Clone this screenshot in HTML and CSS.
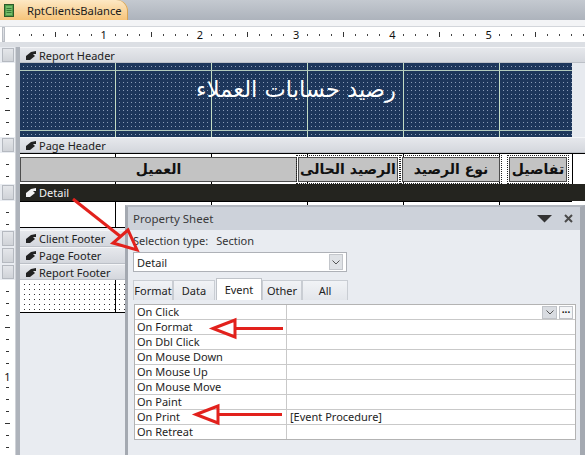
FILE: index.html
```html
<!DOCTYPE html>
<html lang="en">
<head>
<meta charset="utf-8">
<title>RptClientsBalance</title>
<link rel="stylesheet" href="styles.css">
</head>
<body>
<div class="tabstrip">
  <div class="doc-tab">
    <svg class="doc-icon" width="10" height="13" viewBox="0 0 10 13"><rect x="0.5" y="0.5" width="9" height="12" fill="#4f9c48" stroke="#2c5a29"/><rect x="2" y="2" width="6" height="9" fill="#74bb69"/><path d="M2.5 4.5h5M2.5 6.5h5M2.5 8.5h5" stroke="#3a7a35"/></svg>
    <span class="doc-title">RptClientsBalance</span>
  </div>
</div>
<div class="strip-top"></div>
<div class="ruler-row">
  <div class="corner"></div>
  <div class="hruler">
    <div class="inch first"><span class="num">1</span></div>
    <div class="inch"><span class="num">2</span></div>
    <div class="inch"><span class="num">3</span></div>
    <div class="inch"><span class="num">4</span></div>
    <div class="inch"><span class="num">5</span></div>
    <div class="inch"></div>
  </div>
</div>
<div class="strip-mid"></div>

<div class="design">
  <div class="vstrip"></div>

  <div class="selector"></div>
  <div class="bar"><svg class="bar-icon" width="10" height="9" viewBox="0 0 10 9"><polygon points="10,0 10,3 7,3 9,5 4,9 0,9 0,5 5,1" fill="currentColor"/></svg>Report Header</div>

  <div class="vruler"></div>
  <div class="sec rh">
    <div class="report rh-report">
      <div class="title-label">رصيد حسابات العملاء</div>
    </div>
    <div class="outside"></div>
  </div>

  <div class="selector"></div>
  <div class="bar"><svg class="bar-icon" width="10" height="9" viewBox="0 0 10 9"><polygon points="10,0 10,3 7,3 9,5 4,9 0,9 0,5 5,1" fill="currentColor"/></svg>Page Header</div>

  <div class="vruler"></div>
  <div class="sec ph">
    <div class="report ph-report">
      <div class="lbl w1">العميل</div>
      <div class="lbl w2 dotted">الرصيد الحالى</div>
      <div class="lbl w3 dotted">نوع الرصيد</div>
      <div class="lbl w4 dotted">تفاصيل</div>
    </div>
    <div class="outside"></div>
  </div>

  <div class="selector"></div>
  <div class="bar dark"><svg class="bar-icon" width="10" height="9" viewBox="0 0 10 9"><polygon points="10,0 10,3 7,3 9,5 4,9 0,9 0,5 5,1" fill="currentColor"/></svg>Detail</div>

  <div class="vruler"></div>
  <div class="sec dt">
    <div class="report dt-report"></div>
    <div class="outside"></div>
  </div>

  <div class="selector"></div>
  <div class="bar"><svg class="bar-icon" width="10" height="9" viewBox="0 0 10 9"><polygon points="10,0 10,3 7,3 9,5 4,9 0,9 0,5 5,1" fill="currentColor"/></svg>Client Footer</div>

  <div class="selector"></div>
  <div class="bar"><svg class="bar-icon" width="10" height="9" viewBox="0 0 10 9"><polygon points="10,0 10,3 7,3 9,5 4,9 0,9 0,5 5,1" fill="currentColor"/></svg>Page Footer</div>

  <div class="selector"></div>
  <div class="bar"><svg class="bar-icon" width="10" height="9" viewBox="0 0 10 9"><polygon points="10,0 10,3 7,3 9,5 4,9 0,9 0,5 5,1" fill="currentColor"/></svg>Report Footer</div>

  <div class="vruler tall"><span class="vr-num">1</span></div>
  <div class="sec rf">
    <div class="report rf-report"></div>
    <div class="outside"></div>
  </div>
  <div class="blank"></div>
</div>

<div class="prop">
  <div class="prop-title">
    <span class="t">Property Sheet</span>
    <svg class="pt-menu" width="15" height="8" viewBox="0 0 15 8"><polygon points="0,0 15,0 7.5,7.5" fill="#333"/></svg>
    <svg class="pt-close" width="9" height="9" viewBox="0 0 9 9"><path d="M1 1L8 8M8 1L1 8" stroke="#4a4a4a" stroke-width="2"/></svg>
  </div>
  <div class="sel-type"><span>Selection type:</span><span>Section</span></div>
  <div class="combo">
    <span>Detail</span>
    <span class="combo-btn"><svg width="8" height="5" viewBox="0 0 8 5"><path d="M0.5 0.5L4 4L7.5 0.5" fill="none" stroke="#555"/></svg></span>
  </div>
  <div class="tabs">
    <div class="tab t-format">Format</div>
    <div class="tab t-data">Data</div>
    <div class="tab t-event active">Event</div>
    <div class="tab t-other">Other</div>
    <div class="tab t-all">All</div>
  </div>
  <div class="pgrid">
    <div class="cell k">On Click</div>
    <div class="cell v btns">
      <span class="gbtn dd"><svg width="8" height="5" viewBox="0 0 8 5"><path d="M0.5 0.5L4 4L7.5 0.5" fill="none" stroke="#555"/></svg></span>
      <span class="gbtn ell">&middot;&middot;&middot;</span>
    </div>
    <div class="cell k">On Format</div><div class="cell v"></div>
    <div class="cell k">On Dbl Click</div><div class="cell v"></div>
    <div class="cell k">On Mouse Down</div><div class="cell v"></div>
    <div class="cell k">On Mouse Up</div><div class="cell v"></div>
    <div class="cell k">On Mouse Move</div><div class="cell v"></div>
    <div class="cell k">On Paint</div><div class="cell v"></div>
    <div class="cell k">On Print</div><div class="cell v">[Event Procedure]</div>
    <div class="cell k last">On Retreat</div><div class="cell v last"></div>
  </div>
</div>

<svg class="arrows" width="585" height="455" viewBox="0 0 585 455">
  <g fill="none" stroke="#e2211c" stroke-width="3">
    <line x1="73" y1="199" x2="120.5" y2="236.5"/>
    <polygon points="128,230 113,243 137,250"/>
    <line x1="283" y1="328.5" x2="235" y2="328.5"/>
    <polygon points="213,328.5 235,320 235,337"/>
    <line x1="282" y1="414.5" x2="218" y2="414.5"/>
    <polygon points="196,414.5 218,406 218,423"/>
  </g>
</svg>
</body>
</html>
```

FILE: styles.css
```css
* { box-sizing: border-box; margin: 0; padding: 0; }
html, body { width: 585px; height: 455px; overflow: hidden; }
body {
  position: relative;
  background: #e9ecf1;
  font-family: "Noto Sans", "Open Sans", "DejaVu Sans", sans-serif;
  font-size: 11px;
  color: #1e1e1e;
}

/* document tab */
.tabstrip {
  height: 20px;
  display: flex;
  align-items: flex-end;
  background: linear-gradient(#c4c9d0, #adb3bc);
}
.doc-tab {
  width: 128px;
  height: 20px;
  display: flex;
  align-items: center;
  gap: 13px;
  padding-left: 4px;
  background: linear-gradient(#fde8c4, #f6c47a);
  border-top-right-radius: 11px;
  box-shadow: inset -1px 0 0 #d6a456;
}
.doc-icon { display: block; flex: none; }
.doc-title { font-size: 11.2px; color: #1b1b1b; white-space: nowrap; }

.strip-top { height: 7px; background: #f3f4f6; border-bottom: 1px solid #d3d6db; }

/* horizontal ruler */
.ruler-row { height: 15px; display: flex; background: #fff; }
.corner {
  width: 13px;
  margin: 0 3px 0 2px;
  background: linear-gradient(#e4e6ea, #d2d5da);
  border: 1px solid #b9bdc4;
}
.hruler {
  flex: 1;
  display: flex;
  background-color: #fff;
  background-image:
    repeating-linear-gradient(to right, transparent 0 47px, #333 47px 48px, transparent 48px 96px),
    repeating-linear-gradient(to right, transparent 0 11px, #444 11px 12px);
  background-size: 100% 5px, 100% 2px;
  background-position: 0 50%, 0 50%;
  background-repeat: no-repeat;
}
.inch { flex: none; width: 96.25px; display: flex; justify-content: flex-end; align-items: center; }
.inch.first { width: 95.3px; }
.num {
  transform: translateX(50%);
  background: #fff;
  font-size: 11px;
  line-height: 13px;
  padding: 0 1px;
  color: #111;
}
.strip-mid { height: 5px; background: #dcdfe4; }

/* design surface */
.design {
  display: grid;
  grid-template-columns: 15px 5px 1fr;
  grid-template-rows: 16px 74px 16px 31px 17px 29px 17px 17px 16px 33px 1fr;
  height: 408px;
}
.vstrip {
  grid-column: 2;
  grid-row: 1 / -1;
  background: #aeb3bb;
  border-left: 1px solid #cfd2d7;
}
.selector {
  margin: 1px 1px 1px 2px;
  background: linear-gradient(#e4e6ea, #d0d3d8);
  border: 1px solid #b5b9c0;
}
.vruler {
  background-color: #fff;
  background-image:
    repeating-linear-gradient(to bottom, transparent 0 47px, #333 47px 48px, transparent 48px 96px),
    repeating-linear-gradient(to bottom, transparent 0 11px, #333 11px 12px);
  background-size: 5px 100%, 3px 100%;
  background-position: 5px 0, 6px 0;
  background-repeat: no-repeat;
}
.vruler.tall { grid-row: span 2; }
.vr-num {
  display: block;
  margin-top: 90px;
  background: #fff;
  text-align: center;
  font-size: 11px;
  line-height: 13px;
  color: #111;
}

.bar {
  display: flex;
  align-items: center;
  gap: 3px;
  padding-left: 6px;
  background: linear-gradient(#e6e8ec, #d4d7dd);
  border-top: 1px solid #f5f6f8;
  border-bottom: 1px solid #bcc0c7;
  font-size: 11px;
  color: #222;
  white-space: nowrap;
}
.bar.dark { background: #24241f; color: #f2f2f2; border-top-color: #24241f; border-bottom-color: #24241f; }
.bar-icon { flex: none; display: block; }

.sec { display: flex; min-height: 0; }
.report { width: 552px; flex: none; }
.outside { flex: 1; }

/* report header */
.rh-report {
  background-color: #8a9cb8;
  background-image:
    repeating-linear-gradient(to right, transparent 0 95px, #c3dcc4 95px 96px),
    linear-gradient(to right, #1d365b 3px, transparent 3px),
    linear-gradient(#1d365b 3px, transparent 3px);
  background-size: auto, 4px 4px, 4px 4px;
}
.rh .outside { background: #e7eaef; }
.title-label {
  margin-top: 7px;
  height: 61px;
  border-top: 1px solid #b1c9bb;
  border-bottom: 1px solid #b1c9bb;
  padding-top: 4px;
  color: #fff;
  font-family: "DejaVu Sans", sans-serif;
  font-size: 22.6px;
  line-height: 28px;
  text-align: center;
  direction: rtl;
}

/* page header */
.ph-report {
  display: flex;
  align-items: flex-start;
  padding-top: 3px;
  background-color: #fff;
  background-image: repeating-linear-gradient(to right, transparent 0 95px, #000 95px 96px);
  border-top: 1px solid #000;
}
.ph .outside { background: #fff; border-top: 1px solid #000; border-left: 1px solid #000; }
.lbl {
  flex: none;
  height: 25px;
  background: #c3c3c3;
  border: 1px solid #4d4d4d;
  font-family: "DejaVu Sans", sans-serif;
  font-weight: bold;
  font-size: 14px;
  line-height: 23px;
  text-align: center;
  direction: rtl;
  color: #111;
}
.lbl.dotted { outline: 1px dotted #222; outline-offset: 1px; }
.w1 { width: 277px; }
.w2 { width: 100px; margin-left: 1px; }
.w3 { width: 98px; margin-left: 4px; }
.w4 { width: 58px; margin-left: 9px; }

/* detail */
.dt-report {
  height: 27px;
  background-color: #fff;
  background-image: repeating-linear-gradient(to right, transparent 0 95px, #000 95px 96px);
  border-top: 1px solid #000;
  border-bottom: 1px solid #000;
}
.dt .outside { background: #fff; height: 27px; }

/* report footer */
.rf-report {
  background-color: #333;
  background-image:
    repeating-linear-gradient(to right, transparent 0 95px, #000 95px 96px),
    linear-gradient(to right, #fff 4px, transparent 4px),
    linear-gradient(#fff 4px, transparent 4px);
  background-size: auto, 5px 5px, 5px 5px;
  border-bottom: 1px solid #000;
}
.rf .outside { background: #e9ecf1; }
.blank { background: #e9ecf1; }

/* property sheet */
.prop {
  position: absolute;
  left: 125px;
  top: 205px;
  width: 460px;
  height: 250px;
  display: flex;
  flex-direction: column;
  background: #e9ecf1;
  border-left: 3px solid #a4a9b1;
  border-top: 2px solid #b3b8c0;
  border-right: 5px solid #a4a9b1;
}
.prop-title {
  flex: none;
  height: 23px;
  display: flex;
  align-items: center;
  gap: 12px;
  padding: 0 7px 0 5px;
  background: #cdd2da;
  font-size: 11.5px;
  color: #3a3a3a;
}
.prop-title .t { flex: 1; }
.pt-menu, .pt-close { display: block; flex: none; }
.sel-type {
  flex: none;
  height: 20px;
  display: flex;
  align-items: center;
  gap: 8px;
  padding-left: 5px;
  font-size: 11px;
  color: #333;
}
.combo {
  flex: none;
  margin: 2px 0 0 5px;
  width: 214px;
  height: 20px;
  display: flex;
  align-items: center;
  justify-content: space-between;
  padding-left: 3px;
  background: #fff;
  border: 1px solid #aeb1b7;
  font-size: 11px;
}
.combo-btn {
  width: 14px;
  height: 16px;
  margin-right: 3px;
  display: flex;
  align-items: center;
  justify-content: center;
  background: #dfe2e6;
  border: 1px solid #c3c6cb;
}
.tabs {
  flex: none;
  margin: 6px 0 0 5px;
  height: 22px;
  display: flex;
  align-items: flex-end;
}
.tab {
  height: 20px;
  display: flex;
  align-items: center;
  justify-content: center;
  font-size: 11px;
  color: #222;
  border: 1px solid #c9cdd3;
  border-bottom: none;
  background: linear-gradient(#f1f3f6, #e3e6eb);
}
.tab.active { height: 22px; background: #fff; border-color: #bfc3c9; }
.t-format { width: 40px; }
.t-data { width: 42px; }
.t-event { width: 46px; margin-left: 1px; }
.t-other { width: 40px; }
.t-all { width: 46px; }
.pgrid {
  flex: none;
  margin: 4px 0 0 6px;
  width: 442px;
  display: grid;
  grid-template-columns: 152px 1fr;
  background: #fff;
  border: 1px solid #b3b3b3;
}
.cell {
  height: 15px;
  border-bottom: 1px solid #c9c9c9;
  padding-left: 2px;
  font-size: 11px;
  line-height: 14px;
  white-space: nowrap;
  overflow: hidden;
  color: #1e1e1e;
}
.cell.k { border-right: 1px solid #c9c9c9; }
.cell.v { padding-left: 3px; }
.cell.last { border-bottom: none; height: 14px; }
.btns { display: flex; justify-content: flex-end; align-items: center; gap: 2px; padding-right: 2px; }
.gbtn {
  height: 13px;
  display: flex;
  align-items: center;
  justify-content: center;
  border: 1px solid #c0c3c8;
}
.gbtn.dd { width: 15px; background: #d9dce1; }
.gbtn.ell { width: 14px; background: #f4f5f7; font-weight: bold; font-size: 10px; line-height: 10px; color: #111; }

.arrows { position: absolute; left: 0; top: 0; pointer-events: none; }
```
